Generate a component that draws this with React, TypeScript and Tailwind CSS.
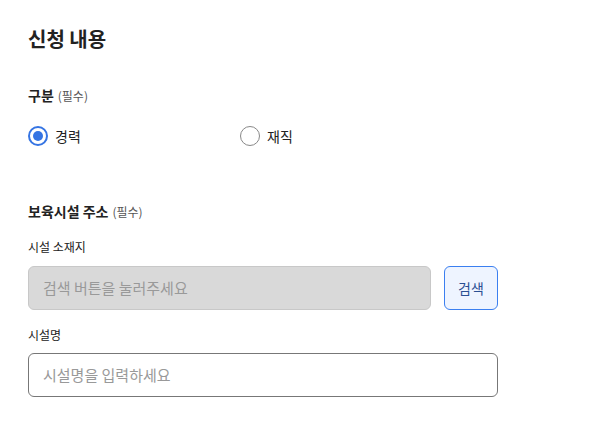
export default function App() {
  return (
    <div className="w-[608px] h-[422px] bg-white pl-[28px] pt-[27px]" style={{ fontFamily: '"Noto Sans CJK KR", "Noto Sans", sans-serif' }}>
      <div className="w-[470px]">
        <h1 className="text-[20px] leading-[24px] font-bold text-[#222]">신청 내용</h1>
        <div className="mt-[34px] flex items-baseline gap-1 h-[20px] leading-[20px]">
          <span className="text-[14px] font-bold text-[#222]">구분</span>
          <span className="text-[12px] text-[#555]">(필수)</span>
        </div>
        <div className="mt-[21px] flex h-[20px] items-center">
          <label className="flex w-[212px] items-center gap-[7px]">
            <span className="flex h-[20px] w-[20px] items-center justify-center rounded-full border-2 border-[#3574e3]">
              <span className="h-[10px] w-[10px] rounded-full bg-[#3574e3]" />
            </span>
            <span className="text-[14px] text-[#222]">경력</span>
          </label>
          <label className="flex items-center gap-[7px]">
            <span className="h-[20px] w-[20px] rounded-full border border-[#888]" />
            <span className="text-[14px] text-[#222]">재직</span>
          </label>
        </div>
        <div className="mt-[55px] flex items-baseline gap-1 h-[20px] leading-[20px]">
          <span className="text-[14px] font-bold text-[#222]">보육시설 주소</span>
          <span className="text-[12px] text-[#555]">(필수)</span>
        </div>
        <div className="mt-[18px] h-[16px] text-[12px] leading-[16px] text-[#222]">시설 소재지</div>
        <div className="mt-[11px] flex gap-[13px]">
          <div className="flex h-[44px] flex-1 items-center rounded-[6px] border border-[#c8c8c8] bg-[#d9d9d9] px-[14px] text-[15px] text-[#999]">
            검색 버튼을 눌러주세요
          </div>
          <button className="h-[44px] w-[54px] rounded-[6px] border border-[#3b7ff0] bg-[#eef4ff] text-[14px] text-[#2a4f93]">
            검색
          </button>
        </div>
        <div className="mt-[17px] h-[16px] text-[12px] leading-[16px] text-[#222]">시설명</div>
        <div className="mt-[10px] flex h-[44px] items-center rounded-[6px] border border-[#777] px-[14px] text-[15px] text-[#999]">
          시설명을 입력하세요
        </div>
      </div>
    </div>
  );
}
